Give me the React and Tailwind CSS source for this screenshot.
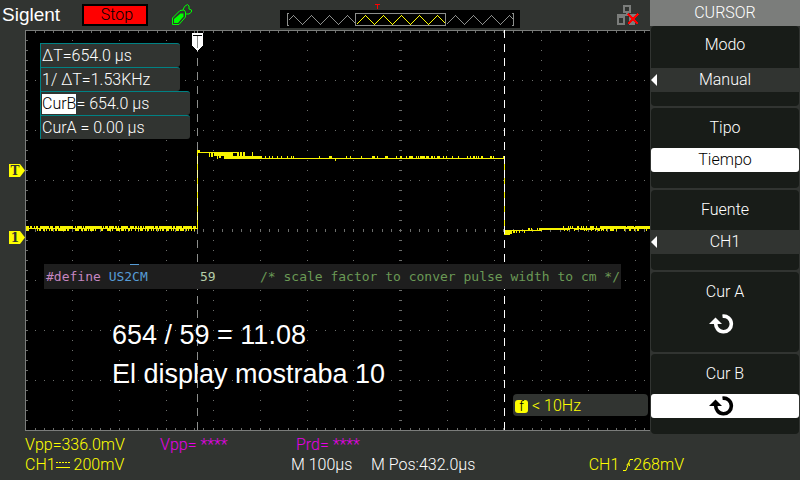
import React from "react";

const YELLOW = "#f7f300";
const DOT = "#6b6d6b";

// ---- graticule -------------------------------------------------------------
const cols = Array.from({ length: 66 }, (_, k) => Math.floor(0.8 + 9.375 * (k + 1)));
const majorCols = Array.from({ length: 13 }, (_, k) => Math.floor(0.8 + 46.875 * (k + 1)));
const rows = Array.from({ length: 39 }, (_, k) => 10 * (k + 1));
const majorRows = [50, 100, 150, 250, 300, 350];

function buildGrid() {
  const r = [];
  cols.forEach((x) => {
    if (x > 623) return;
    r.push([x, 1, 1, 2], [x, 398, 1, 2], [x, 199, 1, 3]);
    majorRows.forEach((y) => r.push([x, y, 1, 1]));
  });
  rows.forEach((y) => {
    r.push([1, y, 2, 1], [374, y, 3, 1]);
    majorCols.forEach((x) => r.push([x, y, 1, 1]));
  });
  return r;
}

// ---- trace -----------------------------------------------------------------
function noise(n) {
  const v = Math.sin(n * 127.1 + 11.7) * 43758.5453;
  return v - Math.floor(v);
}

const HIGH_TICKS = [
  [240, 1], [244, 1], [247, 1], [252, 1], [256, 1], [262, 1], [266, 1], [268, 1],
  [294, 1], [304, 3], [321, 1], [325, 1], [336, 1], [347, 3], [352, 1], [360, 3],
  [371, 1], [375, 2], [381, 1], [384, 4], [391, 1], [393, 1], [395, 5], [401, 3],
  [406, 2], [409, 1], [412, 3], [418, 1], [421, 1], [427, 1], [433, 1], [442, 1],
  [445, 1], [448, 2], [451, 1], [453, 1], [456, 2], [465, 2], [468, 1], [478, 1],
];

function buildTrace() {
  const r = [[1, 198, 172, 1], [172, 121, 1, 78], [172, 120, 3, 3], [172, 122, 42, 1]];
  for (let x = 1; x < 172; x++) {
    if (noise(x) < 0.75) r.push([x, 196, 1, 2]);
    if (noise(x + 500) < 0.6) r.push([x, 199, 1, 2]);
  }
  r.push([184, 123, 1, 4], [186, 123, 2, 4], [189, 122, 19, 4], [199, 126, 38, 3]);
  r.push([192, 126, 1, 3], [194, 126, 2, 2]);
  [[212, 2], [215, 2], [218, 2], [227, 1]].forEach(([x, w]) => r.push([x, 122, w, 4]));
  r.push([199, 128, 281, 1], [310, 129, 1, 2]);
  HIGH_TICKS.forEach(([x, w]) => r.push([x, 126, w, 2]));
  r.push([479, 128, 1, 76], [479, 200, 8, 4], [479, 203, 6, 2], [487, 200, 30, 1]);
  [[488, 2], [491, 1], [494, 1], [499, 1]].forEach(([x, w]) => r.push([x, 201, w, 2]));
  [[503, 2], [506, 1], [512, 1]].forEach(([x, w]) => r.push([x, 198, w, 2]));
  r.push([514, 198, 24, 2], [538, 198, 40, 1], [578, 197, 47, 1]);
  for (let x = 538; x < 578; x++) {
    if (noise(x) < 0.8) r.push([x, 199, 1, 1]);
    if (noise(x + 90) < 0.35) r.push([x, 196, 1, 2]);
    if (noise(x + 200) < 0.2) r.push([x, 199, 1, 2]);
  }
  for (let x = 575; x < 625; x++) {
    r.push([x, 197, 1, 2]);
    if (noise(x) < 0.9) r.push([x, 196, 1, 1]);
    if (noise(x + 70) < 0.3) r.push([x, 199, 1, 2]);
  }
  return r;
}

const grid = buildGrid();
const trace = buildTrace();

function Rects({ items, fill }) {
  return (
    <g fill={fill}>
      {items.map(([x, y, w, h], i) => (
        <rect key={i} x={x} y={y} width={w} height={h} />
      ))}
    </g>
  );
}

function dashes(x, from, to) {
  const r = [];
  for (let y = 0; y < 400; y += 14) if (y + 8 > from && y < to) r.push([x, y, 1, 8]);
  return r;
}

function Plot() {
  return (
    <svg viewBox="0 0 625 401" className="block w-full" shapeRendering="crispEdges" role="img" aria-label="CH1">
      <rect width="625" height="401" fill="#000" />
      <Rects items={grid} fill={DOT} />
      <path d="M0.5 401V0.5H625M0 400.5H625" fill="none" stroke="#7b7d7b" />
      <Rects items={dashes(172, 0, 400)} fill="#8c8e8c" />
      <Rects items={trace} fill={YELLOW} />
      <Rects items={dashes(172, 126, 190)} fill="#ffffa8" />
      <Rects items={dashes(479, 0, 400)} fill="#fff" />
      <path d="M167 3H178V15L173 21H172L167 15Z" fill="#fff" />
      <path d="M168 5.5H177" stroke="#000" />
      <path d="M172.5 6V18" stroke="#8c8e8c" />
    </svg>
  );
}

// ---- icons -----------------------------------------------------------------
function UsbIcon() {
  return (
    <svg width="22" height="22" viewBox="0 0 22 22" fill="none" stroke="#00ff00">
      <path d="M0.500 20.500V14L8 6.500L12 6L13.500 8V13L7 20.500Z" />
      <path d="M2 19V15L8.500 9.500H11.500V12.500L6 19Z" fill="#00ff00" stroke="none" />
      <path d="M11 6L12.500 2.500L15.500 0.500L17 2V5L19.500 6V8L17 10H13.500" />
    </svg>
  );
}

function NetworkIcon() {
  return (
    <svg width="22" height="20" viewBox="0 0 22 20" shapeRendering="crispEdges">
      <path d="M6 0H14V8H11V9H20V11H18V20H12V11H8V20H0V11H0V9H9V8H6ZM8 2V6H12V2ZM2 13V18H6V13Z" fill="#7b7d7b" fillRule="evenodd" />
      <path d="M11 9L21 19M21 9L11 19" stroke="#f00" strokeWidth="2.500" />
    </svg>
  );
}

function KnobIcon() {
  return (
    <svg className="mr-1.5" width="26" height="20" viewBox="0 0 26 20">
      <path d="M13.500 2.200A7.800 7.800 0 1 1 6.800 9" fill="none" stroke="currentColor" strokeWidth="3.600" />
      <path d="M0 10L6.500 3.500L13 10Z" fill="currentColor" />
    </svg>
  );
}

function zigzag(from, to) {
  const pts = [];
  for (let x = from; x <= to; x++) {
    const d = 9 - Math.abs(((x - 4 + 18) % 18) - 9);
    pts.push(`${x + 0.5},${22.5 - d}`);
  }
  return pts.join(" ");
}

function MemoryBar() {
  return (
    <svg width="240" height="27" viewBox="0 0 240 27" shapeRendering="crispEdges" fill="none">
      <path d="M95 2.500H100M97.500 2V7" stroke="#f00" />
      <rect y="8" width="240" height="18" fill="#000" />
      <polyline points={zigzag(8, 75)} stroke="#8c8e8c" />
      <polyline points={zigzag(166, 233)} stroke="#8c8e8c" />
      <polyline points={zigzag(76, 165)} stroke="#ff0" />
      <path d="M9 11.500H7.500V23.500H9M232 11.500H233.500V23.500H232" stroke="#8c8e8c" />
      <rect x="75.500" y="11.500" width="90" height="12" stroke="#8c8e8c" />
    </svg>
  );
}

function Marker({ children }) {
  return (
    <div className="relative flex h-[13px] w-4 items-center justify-center pr-1">
      <svg className="absolute inset-0" width="16" height="13" viewBox="0 0 16 13">
        <path d="M0 0H11L16 6.500L11 13H0Z" fill="#ff0" />
      </svg>
      <span className="relative font-['DejaVu_Serif',serif] text-xs font-bold leading-3 text-[#313431]">{children}</span>
    </div>
  );
}

// ---- soft-key menu -----------------------------------------------------------
const MENU = [
  { label: "Modo", value: "Manual", kind: "list" },
  { label: "Tipo", value: "Tiempo", kind: "active" },
  { label: "Fuente", value: "CH1", kind: "list" },
  { label: "Cur A", kind: "knob" },
  { label: "Cur B", kind: "active" },
];

const VALUE_STYLE = {
  list: "bg-[#313431] text-white",
  active: "bg-white text-black rounded-[3px]",
  knob: "text-white",
};

function SoftKey({ label, value, kind, first }) {
  return (
    <button type="button" className="flex h-20 w-full flex-col rounded bg-[#181c18] text-white">
      <span className={`flex w-full items-center justify-center ${first ? "h-[42px] pb-1" : "h-10"}`}>{label}</span>
      <span className={`relative flex h-6 w-full items-center justify-center ${VALUE_STYLE[kind]}`}>
        {kind === "list" && (
          <svg className="absolute left-0" width="6" height="12" viewBox="0 0 6 12">
            <path d="M0 6L6 0V12Z" fill="#fff" />
          </svg>
        )}
        {value ?? <KnobIcon />}
      </span>
    </button>
  );
}

function Reading({ children, wide }) {
  return (
    <div className={`flex h-6 items-center rounded-r-[3px] border-l border-t border-[#008284] bg-[#313431] pl-px ${wide ? "w-[150px]" : "w-[140px]"}`}>
      {children}
    </div>
  );
}

export default function App() {
  return (
    <div className="min-h-screen bg-[#313431] font-['Roboto','Liberation_Sans',sans-serif] text-base font-light leading-5 text-white">
      <div className="flex">
        <main className="min-w-0 flex-1">
          <header className="flex h-[30px] items-center pl-0.5 pr-[11px]">
            <h1 className="w-20 font-['Liberation_Sans',Arial,sans-serif] text-[19px] font-normal leading-5">Siglent</h1>
            <button type="button" className="h-[22px] w-[66px] border-2 border-black bg-[#f00] pl-1 leading-4 text-black">
              Stop
            </button>
            <div className="flex flex-1 items-center justify-between pl-6">
              <UsbIcon />
              <div className="flex items-center gap-[97px]">
                <MemoryBar />
                <NetworkIcon />
              </div>
            </div>
          </header>
          <div className="flex">
            <div className="flex w-[25px] flex-col items-end gap-[54px] pt-[134px]">
              <Marker>T</Marker>
              <Marker>1</Marker>
            </div>
            <section className="relative min-w-0 flex-1">
              <Plot />
              <div className="absolute left-[15px] top-[13px]">
                <Reading>ΔT=654.0 µs</Reading>
                <Reading>1/ ΔT=1.53KHz</Reading>
                <Reading wide>
                  <span className="bg-white text-black">CurB</span>= 654.0 µs
                </Reading>
                <Reading wide>CurA = 0.00 µs</Reading>
              </div>
              <code className="absolute left-[19px] top-[234px] flex h-[25px] w-[577px] items-center whitespace-pre bg-[#1e1e1e] pl-0.5 font-['DejaVu_Sans_Mono',monospace] text-[13px] font-normal">
                <span className="absolute left-[86px] top-0 h-px w-[9px] bg-[#569cd6]" />
                <span className="w-[154px]">
                  <span className="text-[#c586c0]">#define</span> <span className="text-[#569cd6]">US2CM</span>
                </span>
                <span className="w-[60px] text-[#b5cea8]">59</span>
                <span className="text-[#6a9955]">/* scale factor to conver pulse width to cm */</span>
              </code>
              <p className="absolute left-[87px] top-[286px] font-['Liberation_Sans',Arial,sans-serif] text-[27px] font-normal leading-[39px]">
                654 / 59 = 11.08
                <br />
                El display mostraba 10
              </p>
              <div className="absolute bottom-[15px] right-0.5 flex h-[22px] w-[135px] items-center gap-1 rounded bg-[#313431] pl-0.5 pt-0.5 text-[#ff0]">
                <span className="flex size-[13px] items-center justify-center rounded-[3px] bg-[#ff0] text-sm leading-3 text-black">f</span>
                &lt; 10Hz
              </div>
            </section>
          </div>
        </main>
        <aside className="w-[150px] bg-[#313431] pb-px">
          <h2 className="h-[26px] bg-[#7b7d7b] pt-[3px] text-center">CURSOR</h2>
          <nav className="flex flex-col gap-0.5 px-px">
            {MENU.map((m, i) => (
              <SoftKey key={m.label} first={i === 0} {...m} />
            ))}
          </nav>
        </aside>
      </div>
      <footer className="pl-[25px]">
        <div className="flex">
          <span className="w-[135px] text-[#ff0]">Vpp=336.0mV</span>
          <span className="w-[136px] text-[#e700e7]">Vpp= ****</span>
          <span className="text-[#e700e7]">Prd= ****</span>
        </div>
        <div className="flex pr-[116px]">
          <span className="flex w-[266px] items-center text-[#ff0]">
            CH1
            <svg className="mr-1" width="14" height="8" viewBox="0 0 14 8" stroke="#ff0" shapeRendering="crispEdges">
              <path d="M0 1.500H14" strokeDasharray="2 1" />
              <path d="M0 6.500H14" />
            </svg>
            200mV
          </span>
          <span className="w-20">M 100µs</span>
          <span className="flex-1">M Pos:432.0µs</span>
          <span className="flex items-center text-[#ff0]">
            CH1
            <svg className="ml-1" width="10" height="12" viewBox="0 0 10 12" stroke="#ff0" fill="none">
              <path d="M0 11.500H3L7 0.500H10M3.500 6L6 4L6.500 7" />
            </svg>
            268mV
          </span>
        </div>
      </footer>
    </div>
  );
}
